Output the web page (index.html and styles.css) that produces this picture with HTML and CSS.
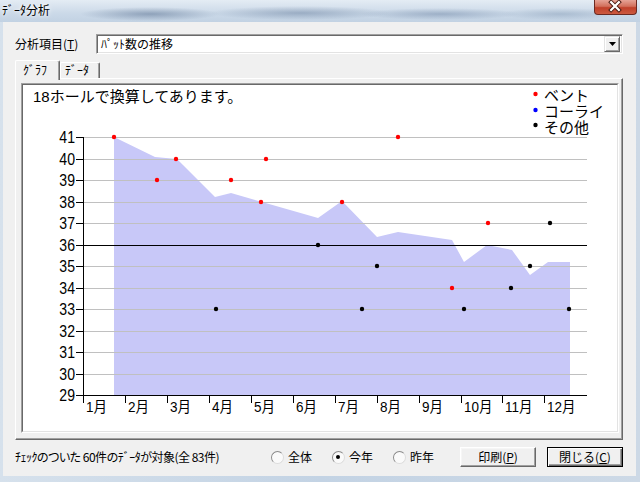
FILE: index.html
```html
<!DOCTYPE html>
<html lang="ja">
<head>
<meta charset="utf-8">
<title>ﾃﾞｰﾀ分析</title>
<link rel="stylesheet" href="styles.css">
</head>
<body>
<div class="window">
  <div class="titlebar">
    <span class="title">ﾃﾞｰﾀ分析</span>
    <div class="close">
      <svg width="43" height="15" viewBox="0 0 43 15">
        <path d="M17.5 2 L25.5 10 M25.5 2 L17.5 10" stroke="#4a1a12" stroke-width="4.2" stroke-linecap="square"/>
        <path d="M17.5 2 L25.5 10 M25.5 2 L17.5 10" stroke="#ffffff" stroke-width="2.2" stroke-linecap="square"/>
      </svg>
    </div>
  </div>
  <div class="client">
    <div class="field-row">
      <span class="field-label">分析項目(<u>T</u>)</span>
      <div class="combo">
        <span class="combo-text">ﾊﾟｯﾄ数の推移</span>
        <span class="combo-btn"><svg width="7" height="4" viewBox="0 0 7 4"><path d="M0 0 H7 L3.5 4 Z" fill="#000"/></svg></span>
      </div>
    </div>
    <div class="tabs">
      <div class="tab active">ｸﾞﾗﾌ</div>
      <div class="tab">ﾃﾞｰﾀ</div>
    </div>
    <div class="panel">
      <div class="chart">
        <svg class="plot" viewBox="23 85 594 346" width="596" height="348">
          <polygon class="area" points="114,395 114,137 155,157 177,159 183,165 215,197 231,193 262,202 318,218 342,201 377,237 398,232 452,240 464,262 487,245 512,250 530,275 548,262 570,262 570,395"/>
          <g class="grid">
            <line x1="83" x2="587" y1="137.5" y2="137.5"/>
            <line x1="83" x2="587" y1="159.5" y2="159.5"/>
            <line x1="83" x2="587" y1="180.5" y2="180.5"/>
            <line x1="83" x2="587" y1="202.5" y2="202.5"/>
            <line x1="83" x2="587" y1="223.5" y2="223.5"/>
            <line x1="83" x2="587" y1="266.5" y2="266.5"/>
            <line x1="83" x2="587" y1="288.5" y2="288.5"/>
            <line x1="83" x2="587" y1="309.5" y2="309.5"/>
            <line x1="83" x2="587" y1="331.5" y2="331.5"/>
            <line x1="83" x2="587" y1="352.5" y2="352.5"/>
            <line x1="83" x2="587" y1="374.5" y2="374.5"/>
          </g>
          <line class="par" x1="83" x2="587" y1="245.5" y2="245.5"/>
          <g class="axis">
            <line x1="83.5" x2="83.5" y1="137" y2="396"/>
            <line x1="83" x2="587" y1="395.5" y2="395.5"/>
            <path d="M76 137.5H83 M76 159.5H83 M76 180.5H83 M76 202.5H83 M76 223.5H83 M76 245.5H83 M76 266.5H83 M76 288.5H83 M76 309.5H83 M76 331.5H83 M76 352.5H83 M76 374.5H83 M76 395.5H83"/>
            <path d="M83.5 395V403 M125.5 395V403 M167.5 395V403 M209.5 395V403 M251.5 395V403 M293.5 395V403 M335.5 395V403 M377.5 395V403 M419.5 395V403 M461.5 395V403 M502.5 395V403 M544.5 395V403"/>
          </g>
          <g class="ylabels">
            <text x="75" y="143">41</text>
            <text x="75" y="165">40</text>
            <text x="75" y="186">39</text>
            <text x="75" y="208">38</text>
            <text x="75" y="229">37</text>
            <text x="75" y="251">36</text>
            <text x="75" y="272">35</text>
            <text x="75" y="294">34</text>
            <text x="75" y="315">33</text>
            <text x="75" y="337">32</text>
            <text x="75" y="358">31</text>
            <text x="75" y="380">30</text>
            <text x="75" y="401">29</text>
          </g>
          <g class="xlabels">
            <text x="86" y="412">1月</text>
            <text x="128" y="412">2月</text>
            <text x="170" y="412">3月</text>
            <text x="212" y="412">4月</text>
            <text x="254" y="412">5月</text>
            <text x="296" y="412">6月</text>
            <text x="338" y="412">7月</text>
            <text x="380" y="412">8月</text>
            <text x="422" y="412">9月</text>
            <text x="464" y="412">10月</text>
            <text x="505" y="412">11月</text>
            <text x="547" y="412">12月</text>
          </g>
          <g class="dots red">
            <circle cx="114" cy="137" r="2.2"/>
            <circle cx="157" cy="180" r="2.2"/>
            <circle cx="176" cy="159" r="2.2"/>
            <circle cx="231" cy="180" r="2.2"/>
            <circle cx="261" cy="202" r="2.2"/>
            <circle cx="266" cy="159" r="2.2"/>
            <circle cx="342" cy="202" r="2.2"/>
            <circle cx="398" cy="137" r="2.2"/>
            <circle cx="452" cy="288" r="2.2"/>
            <circle cx="488" cy="223" r="2.2"/>
          </g>
          <g class="dots black">
            <circle cx="216" cy="309" r="2.2"/>
            <circle cx="318" cy="245" r="2.2"/>
            <circle cx="362" cy="309" r="2.2"/>
            <circle cx="377" cy="266" r="2.2"/>
            <circle cx="464" cy="309" r="2.2"/>
            <circle cx="511" cy="288" r="2.2"/>
            <circle cx="530" cy="266" r="2.2"/>
            <circle cx="550" cy="223" r="2.2"/>
            <circle cx="569" cy="309" r="2.2"/>
          </g>
          <text class="note" x="33" y="102">18ホールで換算してあります。</text>
          <g class="legend">
            <circle class="red" cx="535.5" cy="94" r="2.2"/>
            <text x="544" y="101">ベント</text>
            <circle class="blue" cx="535.5" cy="110" r="2.2"/>
            <text x="544" y="117">コーライ</text>
            <circle class="black" cx="535.5" cy="125" r="2.2"/>
            <text x="544" y="133">その他</text>
          </g>
        </svg>
      </div>
    </div>
    <div class="footer">
      <span class="status">ﾁｪｯｸのついた 60件のﾃﾞｰﾀが対象(全 83件)</span>
      <div class="radios">
        <span class="radio"><span class="radio-dot"></span><span>全体</span></span>
        <span class="radio"><span class="radio-dot checked"><span class="pip"></span></span><span>今年</span></span>
        <span class="radio"><span class="radio-dot"></span><span>昨年</span></span>
      </div>
      <button class="btn">印刷(<u>P</u>)</button>
      <button class="btn default">閉じる(<u>C</u>)</button>
    </div>
  </div>
</div>
</body>
</html>
```
FILE: styles.css
```css
* { box-sizing: border-box; }
html, body { margin: 0; padding: 0; }
body {
  width: 640px;
  height: 482px;
  overflow: hidden;
  font-family: "Noto Sans CJK JP", "Liberation Sans", sans-serif;
  font-size: 12px;
  color: #000;
  background: #c9d7e6;
}
.window {
  width: 640px;
  height: 482px;
  display: flex;
  flex-direction: column;
  background: linear-gradient(to right, #d6e1ec, #c3d3e4 50%, #cdd9e6);
}
.titlebar {
  height: 22px;
  display: flex;
  align-items: flex-start;
  padding-left: 2px;
  background:
    radial-gradient(ellipse 70px 7px at 150px 14px, rgba(70, 95, 130, 0.45), rgba(70, 95, 130, 0)),
    radial-gradient(ellipse 90px 7px at 300px 13px, rgba(80, 105, 140, 0.4), rgba(80, 105, 140, 0)),
    radial-gradient(ellipse 80px 6px at 440px 14px, rgba(90, 115, 150, 0.4), rgba(90, 115, 150, 0)),
    radial-gradient(ellipse 60px 6px at 560px 14px, rgba(110, 135, 165, 0.35), rgba(110, 135, 165, 0)),
    linear-gradient(to bottom, #e4ecf4, #cbd9e8 60%, #c2d2e3);
}
.title {
  margin-top: 3px;
  line-height: 14px;
  font-size: 12px;
  text-shadow: 0 0 6px #fff, 0 0 3px #fff;
}
.close {
  margin-left: auto;
  margin-right: 3px;
  width: 43px;
  height: 15px;
  border: 1px solid #6b2a22;
  border-top: none;
  border-radius: 0 0 4px 4px;
  background: linear-gradient(to bottom, #e6a396 0%, #d2705c 45%, #c0402a 55%, #cc5a40 100%);
  display: flex;
}
.close svg { display: block; margin-left: -1px; }
.client {
  flex: 1;
  margin: 0 4px 6px 3px;
  background: #f0f0f0;
  padding: 12px 13px 9px 12px;
  display: flex;
  flex-direction: column;
}
.field-row {
  height: 20px;
  display: flex;
  align-items: center;
}
.field-label {
  width: 81px;
  line-height: 14px;
  padding-left: 0;
}
.field-label u, .btn u { text-decoration: underline; text-underline-offset: 1px; }
.combo {
  flex: 1;
  height: 20px;
  background: #fff;
  border: 1px solid;
  border-color: #a0a0a0 #fff #fff #a0a0a0;
  box-shadow: inset 1px 1px #696969, inset -1px -1px #e3e3e3;
  display: flex;
  align-items: center;
  padding: 2px 2px 2px 4px;
}
.combo-text { flex: 1; line-height: 14px; }
.combo-btn {
  width: 16px;
  height: 16px;
  background: #f0f0f0;
  border: 1px solid;
  border-color: #e3e3e3 #696969 #696969 #e3e3e3;
  box-shadow: inset 1px 1px #fff, inset -1px -1px #a0a0a0;
  display: flex;
  align-items: center;
  justify-content: center;
}
.combo-btn svg { display: block; }
.tabs {
  margin-top: 6px;
  height: 18px;
  display: flex;
  align-items: flex-end;
  position: relative;
  z-index: 1;
}
.tab {
  height: 16px;
  width: 40px;
  padding-left: 4px;
  line-height: 14px;
  background: #f0f0f0;
  border: 1px solid;
  border-color: #fff #696969 transparent #fff;
  border-bottom: none;
  box-shadow: inset -1px 0 #a0a0a0;
  border-radius: 2px 2px 0 0;
}
.tab.active {
  height: 20px;
  width: 45px;
  padding-left: 7px;
  padding-top: 2px;
  margin-bottom: -2px;
}
.panel {
  height: 362px;
  border: 1px solid;
  border-color: #fff #696969 #696969 #fff;
  box-shadow: inset -1px -1px #a0a0a0;
  padding: 4px 3px 6px 5px;
  background: #f0f0f0;
}
.chart {
  width: 598px;
  height: 350px;
  border: 1px solid;
  border-color: #a0a0a0 #fff #fff #a0a0a0;
}
.plot {
  display: block;
  width: 596px;
  height: 348px;
  border: 1px solid;
  border-color: #696969 #e3e3e3 #e3e3e3 #696969;
  background: #fff;
  font-family: "Liberation Sans", "Noto Sans CJK JP", sans-serif;
}
.area { fill: #c8c8f8; }
.grid line { stroke: #c0c0c0; stroke-width: 1; }
.par { stroke: #000; stroke-width: 1; }
.axis line, .axis path { stroke: #000; stroke-width: 1; fill: none; }
.ylabels text {
  font-size: 16px;
  text-anchor: end;
  transform-box: fill-box;
  transform-origin: right center;
  transform: scaleX(0.88);
}
.xlabels text {
  font-size: 15px;
  transform-box: fill-box;
  transform-origin: left center;
  transform: scaleX(0.9);
}
.note { font-size: 15px; }
.legend text { font-size: 15px; }
.red, .dots.red circle { fill: #ff0000; }
.blue { fill: #0000ff; }
.black, .dots.black circle { fill: #000; }
.footer {
  margin-top: 7px;
  height: 20px;
  display: flex;
  align-items: center;
}
.status {
  flex: 1;
  font-size: 12px;
  letter-spacing: -0.5px;
  font-feature-settings: "palt";
  line-height: 14px;
}
.radios {
  display: flex;
  gap: 20px;
  margin-right: 26px;
}
.radio {
  display: flex;
  align-items: center;
  gap: 4px;
  line-height: 14px;
}
.radio-dot {
  width: 13px;
  height: 13px;
  border-radius: 50%;
  border: 1px solid;
  border-color: #8a8a8a #dcdcdc #dcdcdc #8a8a8a;
  background: #fafafa;
  display: flex;
  align-items: center;
  justify-content: center;
}
.pip {
  width: 4px;
  height: 4px;
  border-radius: 50%;
  background: #000;
}
.btn {
  width: 76px;
  height: 20px;
  margin: 0;
  padding: 0;
  font-family: "Noto Sans CJK JP", "Liberation Sans", sans-serif;
  font-size: 12px;
  line-height: 14px;
  color: #000;
  background: #f0f0f0;
  border: 1px solid;
  border-color: #fff #696969 #696969 #fff;
  box-shadow: inset -1px -1px #a0a0a0, inset 1px 1px #f6f6f6;
}
.btn.default {
  margin-left: 11px;
  border: 1px solid #000;
  box-shadow: inset 1px 1px #fff, inset -1px -1px #696969, inset -2px -2px #a0a0a0;
}
```
